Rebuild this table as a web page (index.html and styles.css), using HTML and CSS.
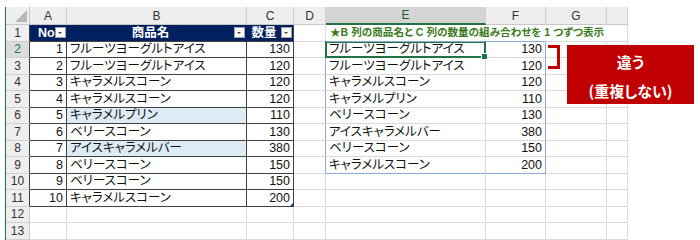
FILE: index.html
```html
<!DOCTYPE html>
<html lang="ja">
<head>
<meta charset="utf-8">
<link rel="stylesheet" href="styles.css">
</head>
<body>
<div class="page">
  <div class="sheet">
    <!-- column headers -->
    <div class="c corner"><span class="tri"></span></div>
    <div class="c ch">A</div>
    <div class="c ch">B</div>
    <div class="c ch">C</div>
    <div class="c ch">D</div>
    <div class="c ch on">E</div>
    <div class="c ch">F</div>
    <div class="c ch">G</div>
    <div class="c ch"></div>

    <!-- row 1 -->
    <div class="c rh tb">1</div>
    <div class="c th thA"><span class="lbl lblA">No</span><span class="fb"></span></div>
    <div class="c th"><span class="lbl">商品名</span><span class="fb"></span></div>
    <div class="c th thC"><span class="lbl">数量</span><span class="fb"></span></div>
    <div class="c"></div>
    <div class="c note sp-b"><span class="note-t">★B 列の商品名と C 列の数量の組み合わせを 1 つずつ表示</span></div>
    <div class="c nor sp-b"></div>
    <div class="c nor"></div>
    <div class="c"></div>

    <!-- row 2 -->
    <div class="c rh on tb">2</div>
    <div class="c t num">1</div>
    <div class="c t">フルーツヨーグルトアイス</div>
    <div class="c t num tr">130</div>
    <div class="c sp-l"></div>
    <div class="c sel">フルーツヨーグルトアイス</div>
    <div class="c num sp-r">130</div>
    <div class="c"></div>
    <div class="c"></div>

    <!-- row 3 -->
    <div class="c rh tb">3</div>
    <div class="c t num">2</div>
    <div class="c t">フルーツヨーグルトアイス</div>
    <div class="c t num tr">120</div>
    <div class="c sp-l"></div>
    <div class="c">フルーツヨーグルトアイス</div>
    <div class="c num sp-r">120</div>
    <div class="c"></div>
    <div class="c"></div>

    <!-- row 4 -->
    <div class="c rh tb">4</div>
    <div class="c t num">3</div>
    <div class="c t">キャラメルスコーン</div>
    <div class="c t num tr">120</div>
    <div class="c sp-l"></div>
    <div class="c">キャラメルスコーン</div>
    <div class="c num sp-r">120</div>
    <div class="c"></div>
    <div class="c"></div>

    <!-- row 5 -->
    <div class="c rh tb">5</div>
    <div class="c t num">4</div>
    <div class="c t">キャラメルスコーン</div>
    <div class="c t num tr">120</div>
    <div class="c sp-l"></div>
    <div class="c">キャラメルプリン</div>
    <div class="c num sp-r">110</div>
    <div class="c"></div>
    <div class="c"></div>

    <!-- row 6 -->
    <div class="c rh tb">6</div>
    <div class="c t num">5</div>
    <div class="c t fill">キャラメルプリン</div>
    <div class="c t num tr">110</div>
    <div class="c sp-l"></div>
    <div class="c">ベリースコーン</div>
    <div class="c num sp-r">130</div>
    <div class="c"></div>
    <div class="c"></div>

    <!-- row 7 -->
    <div class="c rh tb">7</div>
    <div class="c t num">6</div>
    <div class="c t">ベリースコーン</div>
    <div class="c t num tr">130</div>
    <div class="c sp-l"></div>
    <div class="c">アイスキャラメルバー</div>
    <div class="c num sp-r">380</div>
    <div class="c"></div>
    <div class="c"></div>

    <!-- row 8 -->
    <div class="c rh tb">8</div>
    <div class="c t num">7</div>
    <div class="c t fill">アイスキャラメルバー</div>
    <div class="c t num tr">380</div>
    <div class="c sp-l"></div>
    <div class="c">ベリースコーン</div>
    <div class="c num sp-r">150</div>
    <div class="c"></div>
    <div class="c"></div>

    <!-- row 9 -->
    <div class="c rh tb">9</div>
    <div class="c t num">8</div>
    <div class="c t">ベリースコーン</div>
    <div class="c t num tr">150</div>
    <div class="c sp-l"></div>
    <div class="c sp-b">キャラメルスコーン</div>
    <div class="c num sp-r sp-b">200</div>
    <div class="c"></div>
    <div class="c"></div>

    <!-- row 10 -->
    <div class="c rh tb">10</div>
    <div class="c t num">9</div>
    <div class="c t">ベリースコーン</div>
    <div class="c t num tr">150</div>
    <div class="c"></div>
    <div class="c"></div>
    <div class="c"></div>
    <div class="c"></div>
    <div class="c"></div>

    <!-- row 11 -->
    <div class="c rh tb">11</div>
    <div class="c t num">10</div>
    <div class="c t">キャラメルスコーン</div>
    <div class="c t num tr last">200</div>
    <div class="c"></div>
    <div class="c"></div>
    <div class="c"></div>
    <div class="c"></div>
    <div class="c"></div>

    <!-- row 12 -->
    <div class="c rh">12</div>
    <div class="c"></div>
    <div class="c"></div>
    <div class="c"></div>
    <div class="c"></div>
    <div class="c"></div>
    <div class="c"></div>
    <div class="c"></div>
    <div class="c"></div>

    <!-- row 13 -->
    <div class="c rh">13</div>
    <div class="c"></div>
    <div class="c"></div>
    <div class="c"></div>
    <div class="c"></div>
    <div class="c"></div>
    <div class="c"></div>
    <div class="c"></div>
    <div class="c"></div>
  </div>

  <div class="bracket"></div>
  <div class="callout">
    <span>違う</span>
    <span>(重複しない)</span>
  </div>
</div>
</body>
</html>
```

FILE: styles.css
```css
* { box-sizing: border-box; }
html, body { margin: 0; background: #fff; }
body {
  font-family: "Liberation Sans", "Noto Sans CJK JP", sans-serif;
  font-size: 12.5px;
  color: #111;
  font-feature-settings: "palt";
}
.page {
  position: relative;
  width: 700px;
  height: 240px;
  overflow: hidden;
  padding: 7px 0 0 5px;
}
.sheet {
  display: grid;
  grid-template-columns: 24px 37px 180px 47px 32px 160px 60px 61px 21px;
  grid-template-rows: 18px repeat(13, 16.5px);
  width: max-content;
  border-left: 1px solid #217346;
}
.c {
  border-right: 1px solid #dadada;
  border-bottom: 1px solid #dadada;
  display: flex;
  align-items: center;
  white-space: nowrap;
  overflow: hidden;
  padding: 0 3px;
  line-height: 1;
  position: relative;
}
.corner { background: #eeeeee; border-color: #c8c8c8; }
.tri {
  position: absolute;
  right: 2px;
  bottom: 2px;
  width: 0;
  height: 0;
  border-left: 12px solid transparent;
  border-bottom: 12px solid #b8b8b8;
}
.ch {
  background: #eeeeee;
  justify-content: center;
  color: #333;
  font-size: 12px;
  border-right-color: #d0d0d0;
  border-bottom-color: #c8c8c8;
}
.ch.on {
  background: #d4d4d4;
  color: #1e5c32;
  border-bottom: 2px solid #217346;
}
.rh {
  background: #eeeeee;
  justify-content: center;
  color: #333;
  font-size: 12px;
  border-right-color: #c8c8c8;
  border-bottom-color: #d0d0d0;
  padding: 0;
}
.rh.tb { border-right-color: #404040; }
.rh.on {
  background: #dcdcdc;
  color: #217346;
}
.th {
  background: #002060;
  color: #fff;
  font-weight: bold;
  border-right-color: #002060;
  border-bottom-color: #404040;
  padding: 0 1px 0 0;
}
.thC { border-right-color: #404040; }
.lbl { flex: 1; text-align: center; }
.lblA { padding-left: 8px; }
.fb {
  flex: none;
  width: 11px;
  height: 11px;
  background: #fafafa;
  border: 1px solid #a0a0a0;
  position: relative;
}
.fb::after {
  content: "";
  position: absolute;
  left: 2px;
  top: 4px;
  border-left: 2.5px solid transparent;
  border-right: 2.5px solid transparent;
  border-top: 2.5px solid #444;
}
.t {
  border-right-color: #404040;
  border-bottom-color: #404040;
}
.num { justify-content: flex-end; }
.fill { background: #ddebf7; }
.last::after {
  content: "";
  position: absolute;
  right: 0;
  bottom: 0;
  border-left: 3px solid transparent;
  border-bottom: 3px solid #1f3f9f;
}
.note { overflow: visible; z-index: 2; border-right-color: transparent; padding-left: 4px; }
.note-t {
  color: #3b7a1e;
  font-weight: bold;
  font-size: 10.6px;
}
.nor { border-right-color: transparent; }
.sp-l { border-right-color: #8eaadb; }
.sp-r { border-right-color: #8eaadb; }
.sp-b { border-bottom-color: #8eaadb; }
.sel { overflow: visible; }
.sel::after {
  content: "";
  position: absolute;
  left: -1px;
  top: -1px;
  right: -1px;
  bottom: -1px;
  border: 2px solid #217346;
}
.sel::before {
  content: "";
  position: absolute;
  right: -3px;
  bottom: -3px;
  width: 5px;
  height: 5px;
  background: #217346;
  border: 1px solid #fff;
  z-index: 3;
}
.bracket {
  position: absolute;
  left: 548px;
  top: 45px;
  width: 12px;
  height: 24px;
  border: 3px solid #c00000;
  border-left: none;
}
.callout {
  position: absolute;
  left: 567px;
  top: 45px;
  width: 127px;
  height: 59px;
  background: #c00000;
  color: #fff;
  font-weight: bold;
  font-size: 15px;
  font-family: "Noto Sans CJK JP", sans-serif;
  display: flex;
  flex-direction: column;
  align-items: center;
  justify-content: center;
  gap: 8px;
  padding-top: 2px;
}
```
